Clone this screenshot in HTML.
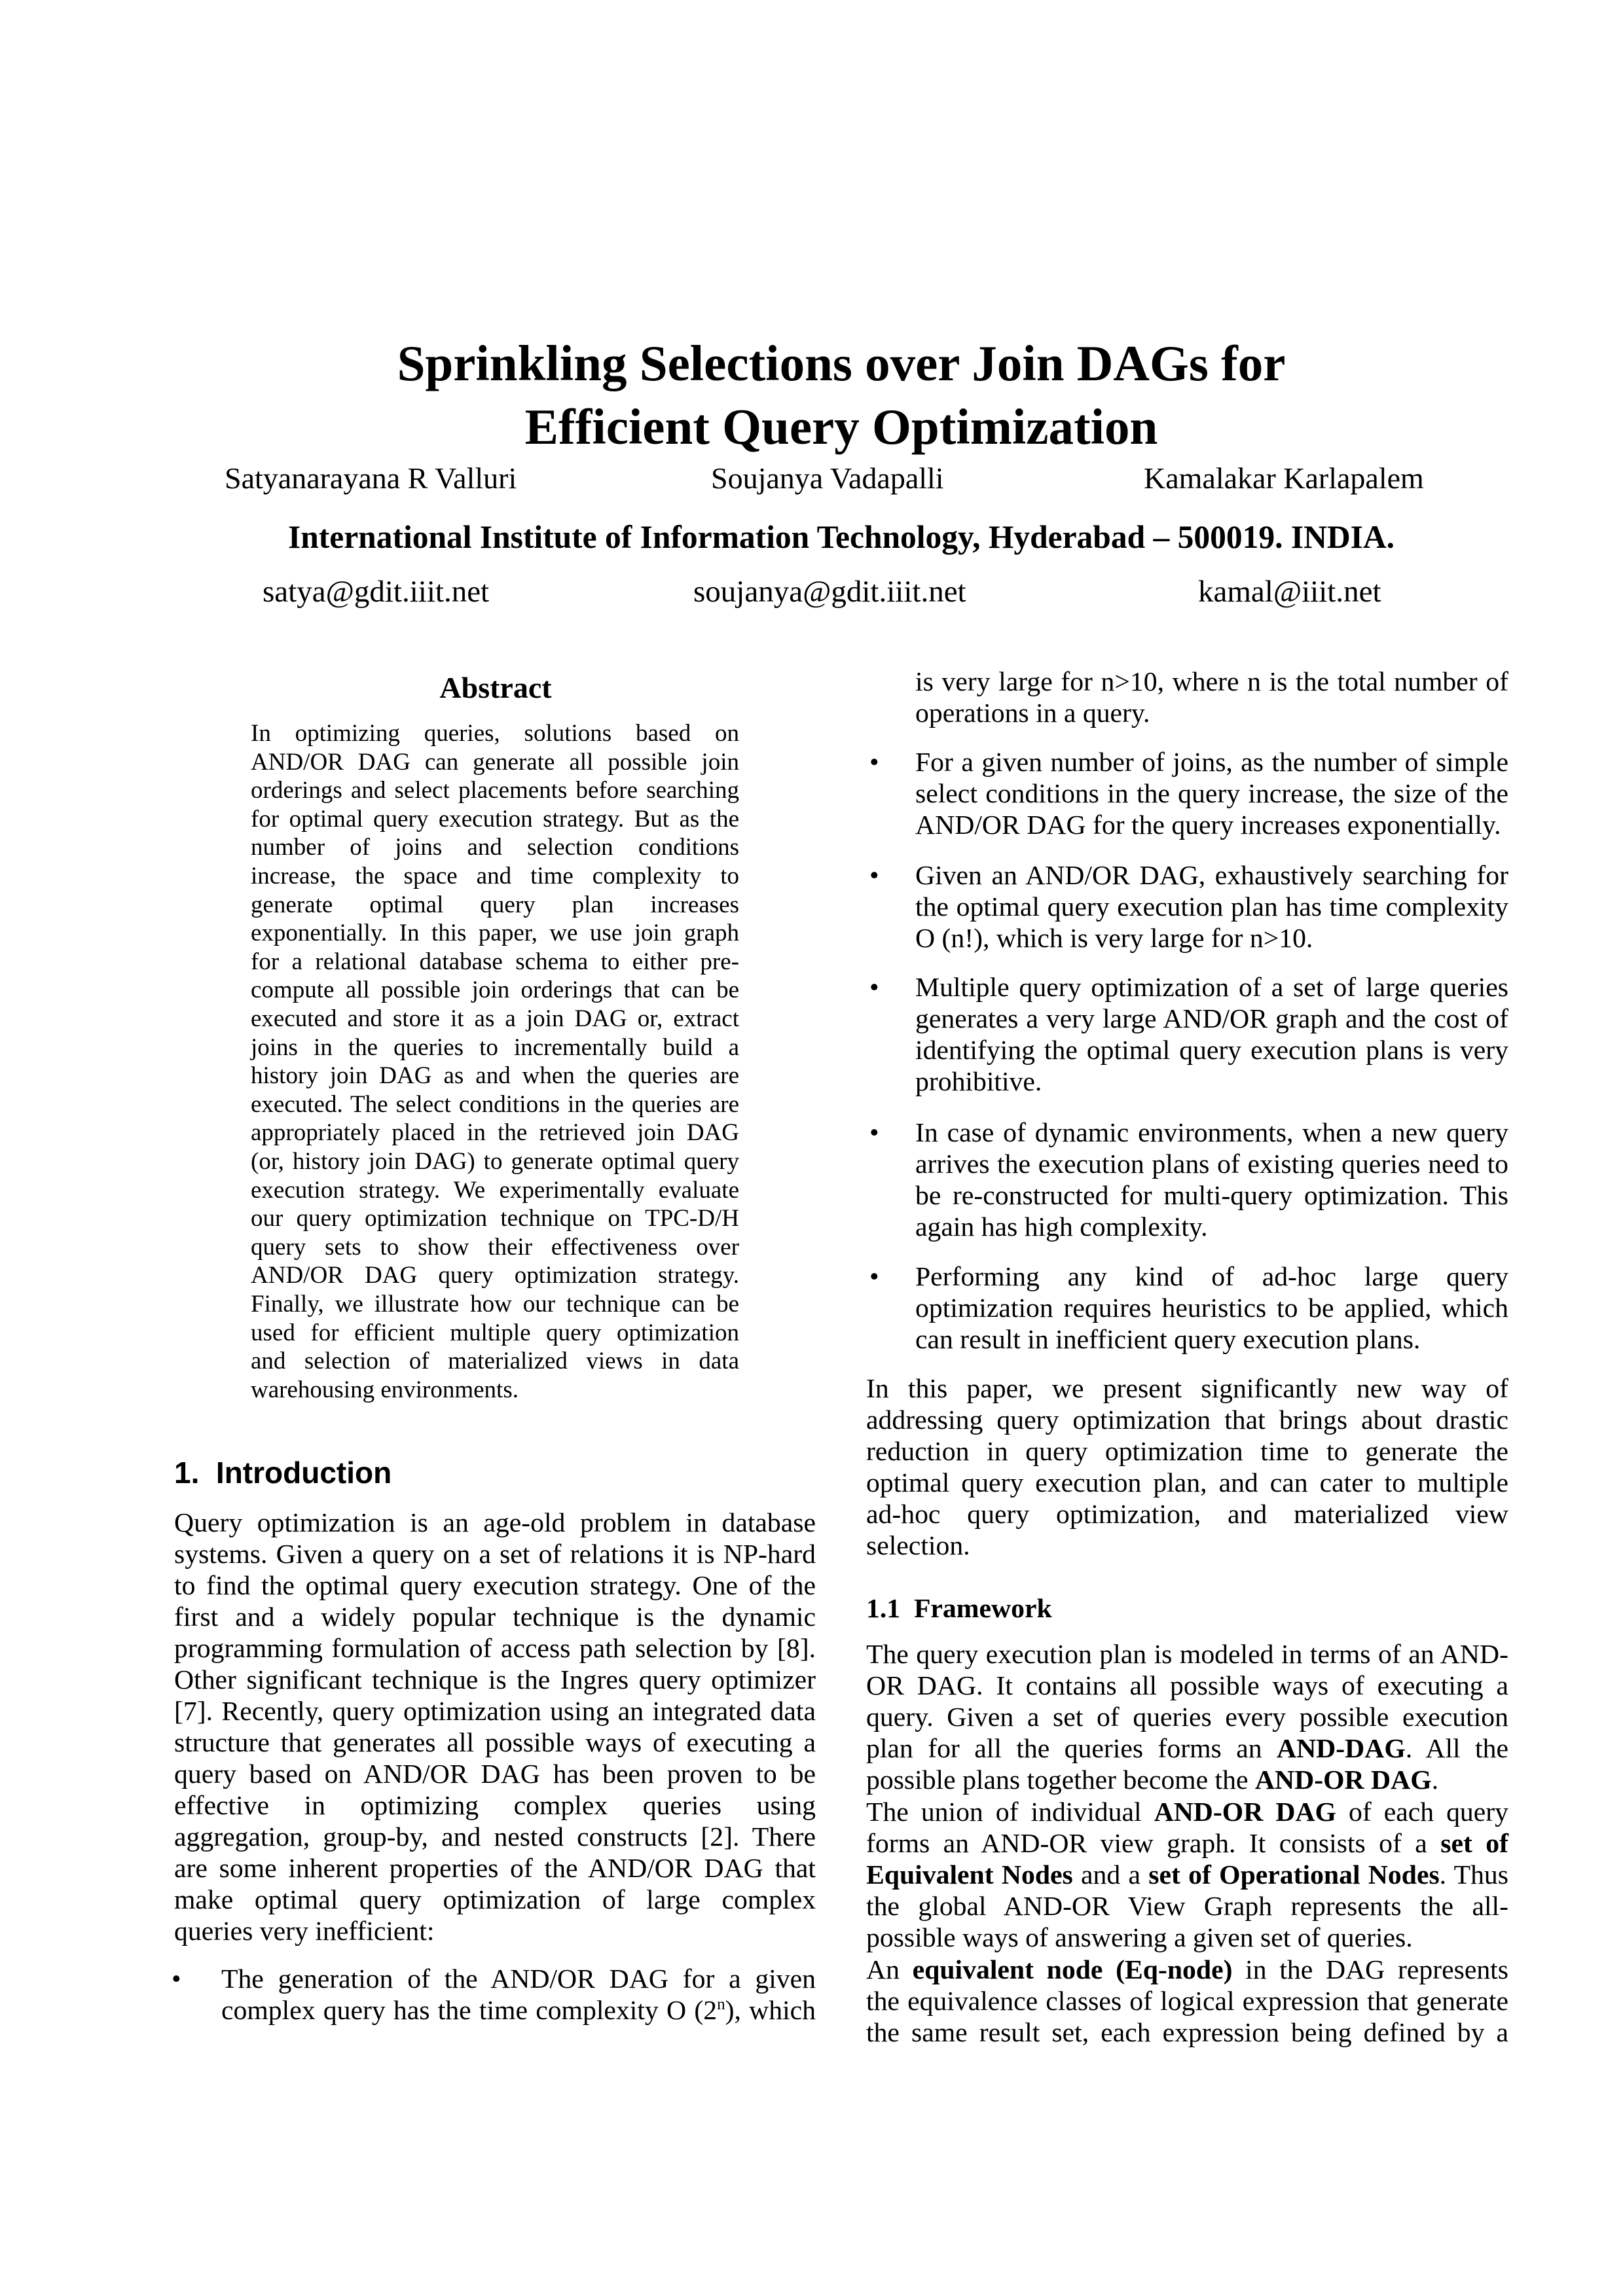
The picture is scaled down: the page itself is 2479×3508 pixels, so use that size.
<!DOCTYPE html>
<html><head><meta charset="utf-8"><style>
body{margin:0;background:#fff}
#p{position:relative;width:2479px;height:3508px;background:#fff;color:#000;font-family:"Liberation Serif",serif;overflow:hidden}
.a{position:absolute;white-space:nowrap}
.l{position:absolute;white-space:nowrap;font-size:41.7px;line-height:48px;height:48px}
.j{text-align:justify;text-align-last:justify}
.L{left:266px;width:980px}
.LB{left:338px;width:908px}
.R{left:1323px;width:981px}
.RB{left:1398px;width:906px}
.ab{position:absolute;white-space:nowrap;font-size:37px;line-height:44px;left:383px;width:746px}
.bul{position:absolute;font-size:41.7px;line-height:48px}
sup{font-size:60%;line-height:0}
</style></head><body><div id="p">
<div class="a" style="left:285px;width:2000px;text-align:center;top:505px;font-size:77px;line-height:100px;font-weight:bold">Sprinkling Selections over Join DAGs for</div>
<div class="a" style="left:285px;width:2000px;text-align:center;top:602px;font-size:77px;line-height:100px;font-weight:bold">Efficient Query Optimization</div>
<div class="a" style="left:343px;top:703px;font-size:46px;line-height:56px">Satyanarayana R Valluri</div>
<div class="a" style="left:1086px;top:703px;font-size:46px;line-height:56px">Soujanya Vadapalli</div>
<div class="a" style="left:1747px;top:703px;font-size:46px;line-height:56px">Kamalakar Karlapalem</div>
<div class="a" style="left:285px;width:2000px;text-align:center;top:793px;font-size:49.5px;line-height:56px;font-weight:bold">International Institute of Information Technology, Hyderabad – 500019. INDIA.</div>
<div class="a" style="left:401px;top:876px;font-size:47px;line-height:56px">satya@gdit.iiit.net</div>
<div class="a" style="left:1059px;top:876px;font-size:47px;line-height:56px">soujanya@gdit.iiit.net</div>
<div class="a" style="left:1830px;top:876px;font-size:47px;line-height:56px">kamal@iiit.net</div>
<div class="a" style="left:557px;width:400px;text-align:center;top:1023px;font-size:46px;line-height:56px;font-weight:bold">Abstract</div>

<div class="ab j" style="top:1099px">In optimizing queries, solutions based on</div>
<div class="ab j" style="top:1143px">AND/OR DAG can generate all possible join</div>
<div class="ab j" style="top:1186px">orderings and select placements before searching</div>
<div class="ab j" style="top:1230px">for optimal query execution strategy. But as the</div>
<div class="ab j" style="top:1273px">number of joins and selection conditions</div>
<div class="ab j" style="top:1317px">increase, the space and time complexity to</div>
<div class="ab j" style="top:1361px">generate optimal query plan increases</div>
<div class="ab j" style="top:1404px">exponentially. In this paper, we use join graph</div>
<div class="ab j" style="top:1448px">for a relational database schema to either pre-</div>
<div class="ab j" style="top:1491px">compute all possible join orderings that can be</div>
<div class="ab j" style="top:1535px">executed and store it as a join DAG or, extract</div>
<div class="ab j" style="top:1579px">joins in the queries to incrementally build a</div>
<div class="ab j" style="top:1622px">history join DAG as and when the queries are</div>
<div class="ab j" style="top:1666px">executed. The select conditions in the queries are</div>
<div class="ab j" style="top:1709px">appropriately placed in the retrieved join DAG</div>
<div class="ab j" style="top:1753px">(or, history join DAG) to generate optimal query</div>
<div class="ab j" style="top:1797px">execution strategy. We experimentally evaluate</div>
<div class="ab j" style="top:1840px">our query optimization technique on TPC-D/H</div>
<div class="ab j" style="top:1884px">query sets to show their effectiveness over</div>
<div class="ab j" style="top:1927px">AND/OR DAG query optimization strategy.</div>
<div class="ab j" style="top:1971px">Finally, we illustrate how our technique can be</div>
<div class="ab j" style="top:2015px">used for efficient multiple query optimization</div>
<div class="ab j" style="top:2058px">and selection of materialized views in data</div>
<div class="ab" style="top:2102px">warehousing environments.</div>

<div class="a" style="left:266px;top:2222px;font-family:'Liberation Sans',sans-serif;font-weight:bold;font-size:46px;line-height:56px">1.&nbsp;&nbsp;Introduction</div>
<div class="l L j" style="top:2303px">Query optimization is an age-old problem in database</div>
<div class="l L j" style="top:2351px">systems. Given a query on a set of relations it is NP-hard</div>
<div class="l L j" style="top:2399px">to find the optimal query execution strategy. One of the</div>
<div class="l L j" style="top:2447px">first and a widely popular technique is the dynamic</div>
<div class="l L j" style="top:2495px">programming formulation of access path selection by [8].</div>
<div class="l L j" style="top:2543px">Other significant technique is the Ingres query optimizer</div>
<div class="l L j" style="top:2591px">[7]. Recently, query optimization using an integrated data</div>
<div class="l L j" style="top:2639px">structure that generates all possible ways of executing a</div>
<div class="l L j" style="top:2687px">query based on AND/OR DAG has been proven to be</div>
<div class="l L j" style="top:2735px">effective in optimizing complex queries using</div>
<div class="l L j" style="top:2783px">aggregation, group-by, and nested constructs [2]. There</div>
<div class="l L j" style="top:2831px">are some inherent properties of the AND/OR DAG that</div>
<div class="l L j" style="top:2879px">make optimal query optimization of large complex</div>
<div class="l L" style="top:2927px">queries very inefficient:</div>
<div class="bul" style="left:262px;top:3000px">•</div>
<div class="l LB j" style="top:3000px">The generation of the AND/OR DAG for a given</div>
<div class="l LB j" style="top:3048px">complex query has the time complexity O (2<sup>n</sup>), which</div>

<div class="l RB j" style="top:1018px">is very large for n&gt;10, where n is the total number of</div>
<div class="l RB" style="top:1066px">operations in a query.</div>
<div class="bul" style="left:1328px;top:1141px">•</div>
<div class="l RB j" style="top:1141px">For a given number of joins, as the number of simple</div>
<div class="l RB j" style="top:1189px">select conditions in the query increase, the size of the</div>
<div class="l RB" style="top:1237px">AND/OR DAG for the query increases exponentially.</div>
<div class="bul" style="left:1328px;top:1314px">•</div>
<div class="l RB j" style="top:1314px">Given an AND/OR DAG, exhaustively searching for</div>
<div class="l RB j" style="top:1362px">the optimal query execution plan has time complexity</div>
<div class="l RB" style="top:1410px">O (n!), which is very large for n&gt;10.</div>
<div class="bul" style="left:1328px;top:1485px">•</div>
<div class="l RB j" style="top:1485px">Multiple query optimization of a set of large queries</div>
<div class="l RB j" style="top:1533px">generates a very large AND/OR graph and the cost of</div>
<div class="l RB j" style="top:1581px">identifying the optimal query execution plans is very</div>
<div class="l RB" style="top:1629px">prohibitive.</div>
<div class="bul" style="left:1328px;top:1707px">•</div>
<div class="l RB j" style="top:1707px">In case of dynamic environments, when a new query</div>
<div class="l RB j" style="top:1755px">arrives the execution plans of existing queries need to</div>
<div class="l RB j" style="top:1803px">be re-constructed for multi-query optimization. This</div>
<div class="l RB" style="top:1851px">again has high complexity.</div>
<div class="bul" style="left:1328px;top:1927px">•</div>
<div class="l RB j" style="top:1927px">Performing any kind of ad-hoc large query</div>
<div class="l RB j" style="top:1975px">optimization requires heuristics to be applied, which</div>
<div class="l RB" style="top:2023px">can result in inefficient query execution plans.</div>
<div class="l R j" style="top:2098px">In this paper, we present significantly new way of</div>
<div class="l R j" style="top:2146px">addressing query optimization that brings about drastic</div>
<div class="l R j" style="top:2194px">reduction in query optimization time to generate the</div>
<div class="l R j" style="top:2242px">optimal query execution plan, and can cater to multiple</div>
<div class="l R j" style="top:2290px">ad-hoc query optimization, and materialized view</div>
<div class="l R" style="top:2338px">selection.</div>
<div class="l R" style="top:2434px;font-weight:bold">1.1&nbsp;&nbsp;Framework</div>
<div class="l R j" style="top:2504px">The query execution plan is modeled in terms of an AND-</div>
<div class="l R j" style="top:2552px">OR DAG. It contains all possible ways of executing a</div>
<div class="l R j" style="top:2600px">query. Given a set of queries every possible execution</div>
<div class="l R j" style="top:2648px">plan for all the queries forms an <b>AND-DAG</b>. All the</div>
<div class="l R" style="top:2696px">possible plans together become the <b>AND-OR DAG</b>.</div>
<div class="l R j" style="top:2745px">The union of individual <b>AND-OR DAG</b> of each query</div>
<div class="l R j" style="top:2793px">forms an AND-OR view graph. It consists of a <b>set of</b></div>
<div class="l R j" style="top:2841px"><b>Equivalent Nodes</b> and a <b>set of Operational Nodes</b>. Thus</div>
<div class="l R j" style="top:2889px">the global AND-OR View Graph represents the all-</div>
<div class="l R" style="top:2937px">possible ways of answering a given set of queries.</div>
<div class="l R j" style="top:2986px">An <b>equivalent node (Eq-node)</b> in the DAG represents</div>
<div class="l R j" style="top:3034px">the equivalence classes of logical expression that generate</div>
<div class="l R j" style="top:3082px">the same result set, each expression being defined by a</div>
</div></body></html>
